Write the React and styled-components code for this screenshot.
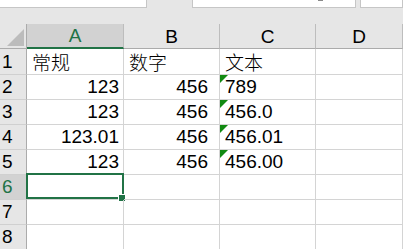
import React from "react";
import styled, { createGlobalStyle } from "styled-components";

const GlobalStyle = createGlobalStyle`
  html, body { margin: 0; padding: 0; background: #ffffff; }
  body { overflow: hidden; }
`;

const Page = styled.div`
  width: 403px;
  height: 249px;
  overflow: hidden;
  background: #ffffff;
  font-family: "Liberation Sans", Arial, "Noto Sans CJK SC", sans-serif;
  color: #000;
`;

const TopBar = styled.div`
  height: 24px;
  background: #e6e6e6;
  display: flex;
  align-items: flex-start;
`;

const Field = styled.div`
  box-sizing: border-box;
  height: 8px;
  background: #ffffff;
  border: 1px solid #c6c6c6;
  border-top: none;
  border-left-width: ${(p) => (p.$noLeft ? 0 : 1)}px;
  width: ${(p) => (p.$w ? `${p.$w}px` : "auto")};
  flex: ${(p) => (p.$grow ? 1 : "none")};
  margin-left: ${(p) => p.$ml || 0}px;
  position: relative;
`;

const Caret = styled.span`
  position: absolute;
  top: 0;
  right: 32px;
  width: 5px;
  height: 1px;
  background: #8a8a8a;
`;

const Grid = styled.div`
  display: grid;
  grid-template-columns: 27px 97px 96px 96px 1fr;
  grid-template-rows: 25px 26px repeat(7, 25px);
`;

const Corner = styled.div`
  box-sizing: border-box;
  background: #e6e6e6;
  border-right: 1px solid #ababab;
  border-bottom: 1px solid #ababab;
  display: flex;
  align-items: flex-end;
  justify-content: flex-end;
  padding: 0 2px 2px 0;
`;

const ColHead = styled.div`
  box-sizing: border-box;
  background: ${(p) => (p.$sel ? "#d2d2d2" : "#e6e6e6")};
  border-right: 1px solid #bdbdbd;
  border-bottom: ${(p) => (p.$sel ? "2px solid #217346" : "1px solid #ababab")};
  color: ${(p) => (p.$sel ? "#217346" : "#000")};
  font-size: 19px;
  display: flex;
  align-items: center;
  justify-content: center;
  padding-top: 1px;
`;

const RowHead = styled.div`
  box-sizing: border-box;
  background: ${(p) => (p.$sel ? "#d2d2d2" : "#e6e6e6")};
  border-right: 1px solid #ababab;
  border-bottom: 1px solid #d0d0d0;
  color: ${(p) => (p.$sel ? "#217346" : "#000")};
  font-size: 19px;
  line-height: 22px;
  display: flex;
  align-items: flex-end;
  padding-left: 2px;
  padding-bottom: 1px;
`;

const Cell = styled.div`
  box-sizing: border-box;
  position: relative;
  border-right: 1px solid #d4d4d4;
  border-bottom: 1px solid #d4d4d4;
  font-size: 19px;
  line-height: 22px;
  display: flex;
  align-items: flex-end;
  justify-content: ${(p) => (p.$right ? "flex-end" : "flex-start")};
  padding: 0 ${(p) => p.$pr ?? 4}px 1px ${(p) => p.$pl ?? 5}px;
  white-space: nowrap;
`;

const Cjk = styled.span`
  font-family: "Noto Sans CJK SC", sans-serif;
  font-weight: 300;
  font-size: 19px;
`;

const Flag = styled.span`
  position: absolute;
  top: 0;
  left: 0;
  width: 0;
  height: 0;
  border-top: 8px solid #118a11;
  border-right: 8px solid transparent;
`;

const Selection = styled.div`
  position: absolute;
  top: -2px;
  left: -1px;
  right: -1px;
  bottom: 0;
  border: 2px solid #217346;
  pointer-events: none;
`;

const Handle = styled.span`
  position: absolute;
  right: -3px;
  bottom: -3px;
  width: 8px;
  height: 8px;
  box-sizing: border-box;
  background: #217346;
  border: 1px solid #ffffff;
`;

const rows = [
  { a: { t: "常规", cjk: true }, b: { t: "数字", cjk: true }, c: { t: "文本", cjk: true } },
  { a: { t: "123", num: true }, b: { t: "456", num: true }, c: { t: "789", flag: true } },
  { a: { t: "123", num: true }, b: { t: "456", num: true }, c: { t: "456.0", flag: true } },
  { a: { t: "123.01", num: true }, b: { t: "456", num: true }, c: { t: "456.01", flag: true } },
  { a: { t: "123", num: true }, b: { t: "456", num: true }, c: { t: "456.00", flag: true } },
  {},
  {},
  {},
];

function DataCell({ v, col, children }) {
  if (!v) return <Cell>{children}</Cell>;
  const pr = v.num ? (col === "b" ? 11 : 4) : 4;
  return (
    <Cell $right={v.num} $pr={pr}>
      {v.flag && <Flag />}
      {v.cjk ? <Cjk>{v.t}</Cjk> : v.t}
      {children}
    </Cell>
  );
}

export default function App() {
  return (
    <Page>
      <GlobalStyle />
      <TopBar>
        <Field $w={147} $noLeft />
        <Field $w={164} $ml={45}>
          <Caret />
        </Field>
        <Field $grow $ml={4} />
      </TopBar>
      <Grid>
        <Corner>
          <svg width="17" height="17" viewBox="0 0 17 17">
            <polygon points="17,0 17,17 0,17" fill="#bcbcbc" />
          </svg>
        </Corner>
        <ColHead $sel>A</ColHead>
        <ColHead>B</ColHead>
        <ColHead>C</ColHead>
        <ColHead>D</ColHead>
        {rows.map((r, i) => {
          const sel = i === 5;
          return (
            <React.Fragment key={i}>
              <RowHead $sel={sel}>{i + 1}</RowHead>
              <DataCell v={r.a} col="a">
                {sel && (
                  <>
                    <Selection />
                    <Handle />
                  </>
                )}
              </DataCell>
              <DataCell v={r.b} col="b" />
              <DataCell v={r.c} col="c" />
              <Cell />
            </React.Fragment>
          );
        })}
      </Grid>
    </Page>
  );
}
